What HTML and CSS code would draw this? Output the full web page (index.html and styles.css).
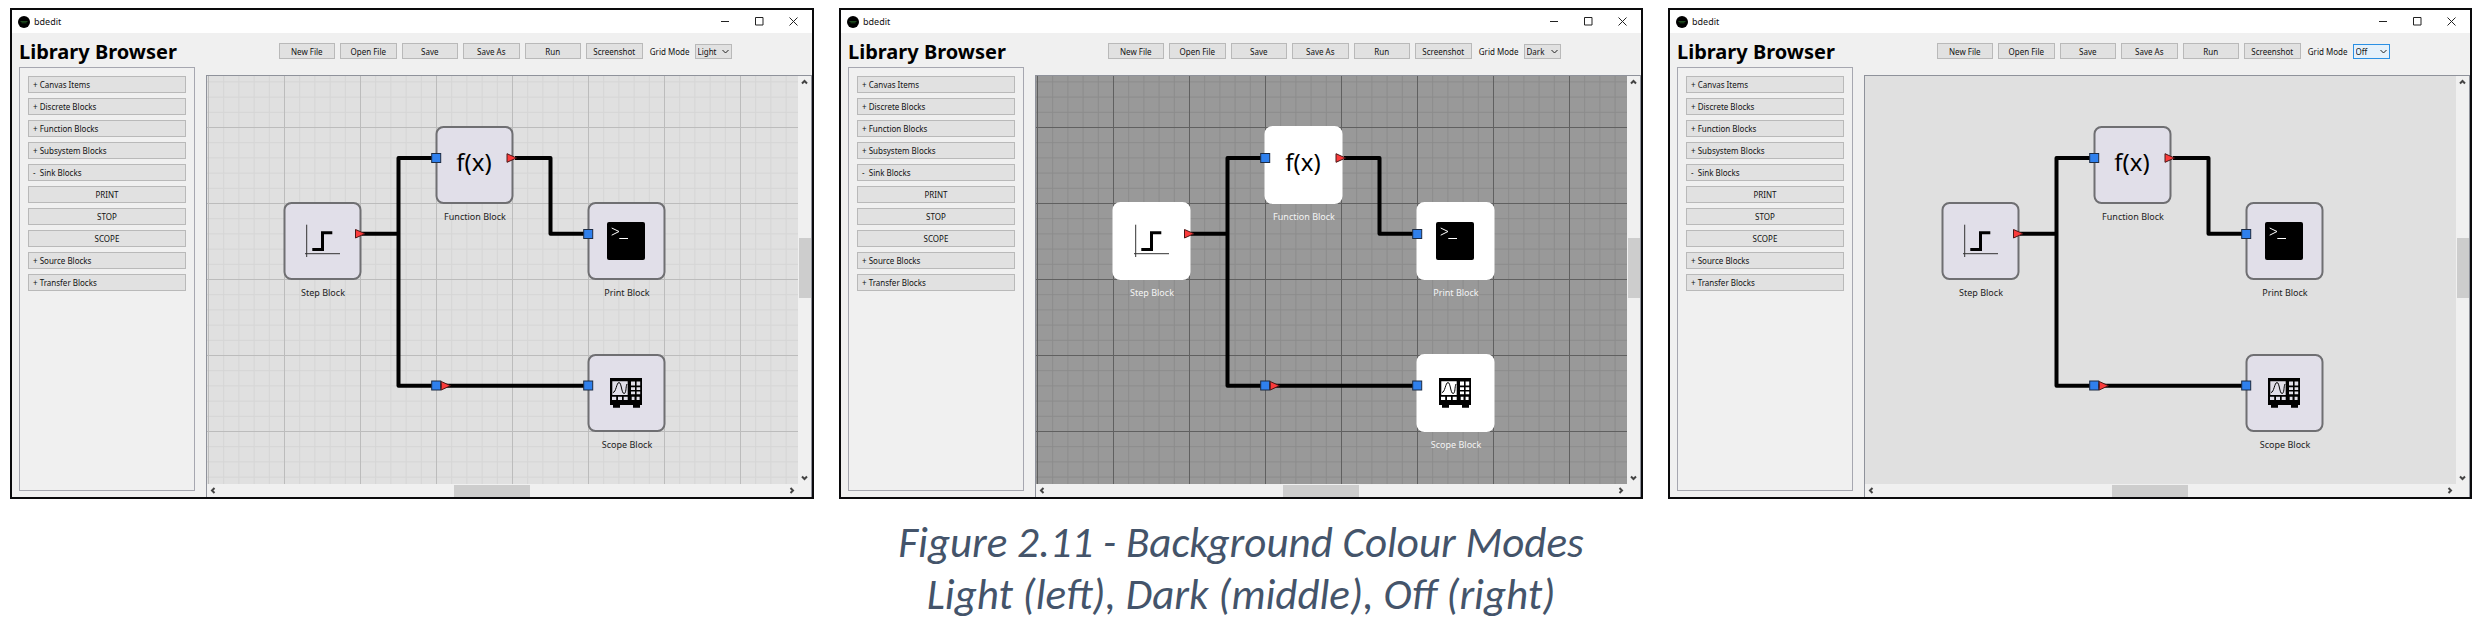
FILE: index.html
```
<!DOCTYPE html>
<html lang="en">
<head>
<meta charset="utf-8">
<title>Background Colour Modes</title>
<link rel="stylesheet" href="styles.css">
</head>
<body>
<svg class="defs" aria-hidden="true">
  <defs>
    <pattern id="grid-light" x="1" y="51" width="76" height="76" patternUnits="userSpaceOnUse">
      <path class="minor-light" d="M15.7 0V76M30.9 0V76M46.1 0V76M61.3 0V76M0 15.7H76M0 30.9H76M0 46.1H76M0 61.3H76"/>
      <path class="major-light" d="M.5 0V76M0 .5H76"/>
    </pattern>
    <pattern id="grid-dark" x="1" y="51" width="76" height="76" patternUnits="userSpaceOnUse">
      <path class="minor-dark" d="M15.7 0V76M30.9 0V76M46.1 0V76M61.3 0V76M0 15.7H76M0 30.9H76M0 46.1H76M0 61.3H76"/>
      <path class="major-dark" d="M.5 0V76M0 .5H76"/>
    </pattern>
    <symbol id="diagram" overflow="visible">
      <path class="wire" d="M155 157.7H191.5M229 82H191.5V309.7H381M308 82H343.5V157.7H381"/>
      <g class="block">
        <rect x="77.5" y="127" width="76" height="76" rx="7"/>
        <rect x="229.5" y="51" width="76" height="76" rx="7"/>
        <rect x="381.5" y="127" width="76" height="76" rx="7"/>
        <rect x="381.5" y="279" width="76" height="76" rx="7"/>
      </g>
      <path class="axis" d="M99.7 148.7V181M98 177.7H133"/>
      <path class="step" d="M105.3 173.6H115.5V156.8H125.3"/>
      <rect x="400" y="146" width="38" height="38" rx="2"/>
      <path class="prompt" d="M404.7 152L412 155.5L404.7 159.2M412.3 162.5H421"/>
      <path d="M403 302H435V329H433V331.7H426V329H413V331.7H406V329H403Z"/>
      <path class="cut" d="M405.3 305.3H420.7V319H405.3ZM424 305.6h4v4h-4zM429.6 305.6h3.6v4h-3.6zM424 311.2h4v2.8h-4zM429.6 311.2h3.6v2.8h-3.6zM424 315.6h4v2.6h-4zM429.6 315.6h3.6v2.6h-3.6zM405 320.8h4.2v3.2h-4.2zM411 320.8h4v3.2h-4zM416.7 320.8h4v3.2h-4zM424.7 320.8h2.8v3.2h-2.8zM429.6 320.8h3v3.2h-3z"/>
      <path class="wave" d="M406 316.5C409 316.500 409.500 306.500 412 306.500S414.500 317.500 417 317.500S418.500 311 420 308"/>
      <g class="input">
        <rect x="224.700" y="77.500" width="9" height="9"/>
        <rect x="376.700" y="153.500" width="9" height="9"/>
        <rect x="224.700" y="305" width="9" height="9"/>
        <rect x="376.700" y="305" width="9" height="9"/>
      </g>
      <path class="output" d="M148.500 153.500L158 157.700L148.500 162ZM300 77.700L309.500 82L300 86.300ZM234.200 305.500L243.500 309.700L234.200 314Z"/>
    </symbol>
    <symbol id="win-min" viewBox="0 0 9 9"><path class="glyph" d="M0 4.500H8"/></symbol>
    <symbol id="win-max" viewBox="0 0 9 9"><path class="glyph" d="M.5 .5H8V8H.5Z"/></symbol>
    <symbol id="win-close" viewBox="0 0 9 9"><path class="glyph" d="M.5 .5L8.500 8.500M8.500 .5L.5 8.500"/></symbol>
    <symbol id="chevron" viewBox="0 0 9 9"><path class="glyph" d="M1.500 3L4.500 6L7.500 3"/></symbol>
    <symbol id="arrow" viewBox="0 0 9 9"><path class="arrow" d="M2 5.500L4.500 3L7 5.500"/></symbol>
    <symbol id="logo" viewBox="0 0 12 12"><circle cx="6" cy="6" r="6"/><path class="logo-mark" d="M2.500 5.500H9.500M3.500 6.800H8.500"/></symbol>
  </defs>
</svg>

<main class="figure">
  <div class="windows">
    <section class="window light">
      <header class="titlebar">
        <svg class="logo"><use href="#logo"/></svg>
        <span class="app-name">bdedit</span>
        <button class="win-btn" aria-label="Minimise"><svg class="icon"><use href="#win-min"/></svg></button>
        <button class="win-btn" aria-label="Maximise"><svg class="icon"><use href="#win-max"/></svg></button>
        <button class="win-btn" aria-label="Close"><svg class="icon"><use href="#win-close"/></svg></button>
      </header>
      <div class="body">
        <aside class="library">
          <h2 class="library-title">Library Browser</h2>
          <div class="library-list">
            <button class="item">+ Canvas Items</button>
            <button class="item">+ Discrete Blocks</button>
            <button class="item">+ Function Blocks</button>
            <button class="item">+ Subsystem Blocks</button>
            <button class="item">-&nbsp; Sink Blocks</button>
            <button class="item sub">PRINT</button>
            <button class="item sub">STOP</button>
            <button class="item sub">SCOPE</button>
            <button class="item">+ Source Blocks</button>
            <button class="item">+ Transfer Blocks</button>
          </div>
        </aside>
        <div class="editor">
          <div class="toolbar">
            <div class="actions">
              <button class="action">New File</button>
              <button class="action">Open File</button>
              <button class="action">Save</button>
              <button class="action">Save As</button>
              <button class="action">Run</button>
              <button class="action">Screenshot</button>
            </div>
            <label class="mode-label" for="mode-1">Grid Mode</label>
            <div class="mode">
              <select class="mode-select" id="mode-1"><option selected>Light</option><option>Dark</option><option>Off</option></select>
              <svg class="icon mode-icon"><use href="#chevron"/></svg>
            </div>
          </div>
          <div class="view">
            <svg class="canvas" role="img" aria-label="Block diagram">
              <rect width="100%" height="100%" fill="url(#grid-light)"/>
              <use href="#diagram"/>
              <text class="fx" x="267" y="95">f(x)</text>
              <text class="name" x="116" y="220">Step Block</text>
              <text class="name" x="268" y="144">Function Block</text>
              <text class="name" x="420" y="220">Print Block</text>
              <text class="name" x="420" y="372">Scope Block</text>
            </svg>
            <div class="scroll vertical">
              <svg class="icon"><use href="#arrow"/></svg>
              <div class="before"></div><div class="thumb"></div><div class="after"></div>
              <svg class="icon down"><use href="#arrow"/></svg>
            </div>
            <div class="scroll horizontal">
              <svg class="icon left"><use href="#arrow"/></svg>
              <div class="before"></div><div class="thumb"></div><div class="after"></div>
              <svg class="icon right"><use href="#arrow"/></svg>
            </div>
          </div>
        </div>
      </div>
    </section>

    <section class="window dark">
      <header class="titlebar">
        <svg class="logo"><use href="#logo"/></svg>
        <span class="app-name">bdedit</span>
        <button class="win-btn" aria-label="Minimise"><svg class="icon"><use href="#win-min"/></svg></button>
        <button class="win-btn" aria-label="Maximise"><svg class="icon"><use href="#win-max"/></svg></button>
        <button class="win-btn" aria-label="Close"><svg class="icon"><use href="#win-close"/></svg></button>
      </header>
      <div class="body">
        <aside class="library">
          <h2 class="library-title">Library Browser</h2>
          <div class="library-list">
            <button class="item">+ Canvas Items</button>
            <button class="item">+ Discrete Blocks</button>
            <button class="item">+ Function Blocks</button>
            <button class="item">+ Subsystem Blocks</button>
            <button class="item">-&nbsp; Sink Blocks</button>
            <button class="item sub">PRINT</button>
            <button class="item sub">STOP</button>
            <button class="item sub">SCOPE</button>
            <button class="item">+ Source Blocks</button>
            <button class="item">+ Transfer Blocks</button>
          </div>
        </aside>
        <div class="editor">
          <div class="toolbar">
            <div class="actions">
              <button class="action">New File</button>
              <button class="action">Open File</button>
              <button class="action">Save</button>
              <button class="action">Save As</button>
              <button class="action">Run</button>
              <button class="action">Screenshot</button>
            </div>
            <label class="mode-label" for="mode-2">Grid Mode</label>
            <div class="mode">
              <select class="mode-select" id="mode-2"><option>Light</option><option selected>Dark</option><option>Off</option></select>
              <svg class="icon mode-icon"><use href="#chevron"/></svg>
            </div>
          </div>
          <div class="view">
            <svg class="canvas" role="img" aria-label="Block diagram">
              <rect width="100%" height="100%" fill="url(#grid-dark)"/>
              <use href="#diagram"/>
              <text class="fx" x="267" y="95">f(x)</text>
              <text class="name" x="116" y="220">Step Block</text>
              <text class="name" x="268" y="144">Function Block</text>
              <text class="name" x="420" y="220">Print Block</text>
              <text class="name" x="420" y="372">Scope Block</text>
            </svg>
            <div class="scroll vertical">
              <svg class="icon"><use href="#arrow"/></svg>
              <div class="before"></div><div class="thumb"></div><div class="after"></div>
              <svg class="icon down"><use href="#arrow"/></svg>
            </div>
            <div class="scroll horizontal">
              <svg class="icon left"><use href="#arrow"/></svg>
              <div class="before"></div><div class="thumb"></div><div class="after"></div>
              <svg class="icon right"><use href="#arrow"/></svg>
            </div>
          </div>
        </div>
      </div>
    </section>

    <section class="window off">
      <header class="titlebar">
        <svg class="logo"><use href="#logo"/></svg>
        <span class="app-name">bdedit</span>
        <button class="win-btn" aria-label="Minimise"><svg class="icon"><use href="#win-min"/></svg></button>
        <button class="win-btn" aria-label="Maximise"><svg class="icon"><use href="#win-max"/></svg></button>
        <button class="win-btn" aria-label="Close"><svg class="icon"><use href="#win-close"/></svg></button>
      </header>
      <div class="body">
        <aside class="library">
          <h2 class="library-title">Library Browser</h2>
          <div class="library-list">
            <button class="item">+ Canvas Items</button>
            <button class="item">+ Discrete Blocks</button>
            <button class="item">+ Function Blocks</button>
            <button class="item">+ Subsystem Blocks</button>
            <button class="item">-&nbsp; Sink Blocks</button>
            <button class="item sub">PRINT</button>
            <button class="item sub">STOP</button>
            <button class="item sub">SCOPE</button>
            <button class="item">+ Source Blocks</button>
            <button class="item">+ Transfer Blocks</button>
          </div>
        </aside>
        <div class="editor">
          <div class="toolbar">
            <div class="actions">
              <button class="action">New File</button>
              <button class="action">Open File</button>
              <button class="action">Save</button>
              <button class="action">Save As</button>
              <button class="action">Run</button>
              <button class="action">Screenshot</button>
            </div>
            <label class="mode-label" for="mode-3">Grid Mode</label>
            <div class="mode">
              <select class="mode-select active" id="mode-3"><option>Light</option><option>Dark</option><option selected>Off</option></select>
              <svg class="icon mode-icon"><use href="#chevron"/></svg>
            </div>
          </div>
          <div class="view">
            <svg class="canvas" role="img" aria-label="Block diagram">
              <use href="#diagram"/>
              <text class="fx" x="267" y="95">f(x)</text>
              <text class="name" x="116" y="220">Step Block</text>
              <text class="name" x="268" y="144">Function Block</text>
              <text class="name" x="420" y="220">Print Block</text>
              <text class="name" x="420" y="372">Scope Block</text>
            </svg>
            <div class="scroll vertical">
              <svg class="icon"><use href="#arrow"/></svg>
              <div class="before"></div><div class="thumb"></div><div class="after"></div>
              <svg class="icon down"><use href="#arrow"/></svg>
            </div>
            <div class="scroll horizontal">
              <svg class="icon left"><use href="#arrow"/></svg>
              <div class="before"></div><div class="thumb"></div><div class="after"></div>
              <svg class="icon right"><use href="#arrow"/></svg>
            </div>
          </div>
        </div>
      </div>
    </section>
  </div>
  <p class="caption">Figure 2.11 - Background Colour Modes<br>Light (left), Dark (middle), Off (right)</p>
</main>
</body>
</html>
```
FILE: styles.css
```
* {
  box-sizing: border-box;
}

body {
  margin: 0;
  background: #fff;
  color: #111;
  font: 8px/11px "Noto Sans", "Open Sans", sans-serif;
}

button,
select {
  margin: 0;
  padding: 0;
  border: 1px solid #b9b9b9;
  border-radius: 0;
  background: #e1e1e1;
  color: inherit;
  font: inherit;
}

.defs {
  display: block;
  width: 0;
  height: 0;
}

.figure {
  padding: 8px 9px 0 10px;
}

.windows {
  display: grid;
  grid-template-columns: repeat(3, minmax(0, 1fr));
  gap: 25px;
}

.window {
  border: 2px solid #0a0a0c;
  background: #f0f0f0;
  --canvas: #e0e0e0;
  --block: #e1dfe9;
  --outline: #6f6f72;
  --name: #1c1c1c;
}

.window.dark {
  --canvas: #999;
  --block: #fff;
  --outline: #fff;
  --name: #f4f4f4;
}

/* Title bar */
.titlebar {
  display: flex;
  align-items: center;
  height: 23px;
  padding: 0 2px 0 6px;
  background: #fff;
}

.logo {
  width: 12px;
  height: 12px;
}

.logo-mark {
  stroke: #1d4a1d;
  stroke-width: 1;
}

.app-name {
  flex: 1;
  padding-left: 4px;
  font-size: 9px;
}

.win-btn {
  display: grid;
  place-items: center;
  width: 34px;
  height: 23px;
  border: 0;
  background: none;
}

.icon {
  display: block;
  width: 9px;
  height: 9px;
}

.glyph {
  fill: none;
  stroke: #222;
  stroke-width: 1;
}

.arrow {
  fill: none;
  stroke: #444;
  stroke-width: 2;
}

/* Library panel */
.body {
  display: grid;
  grid-template-columns: 194px minmax(0, 1fr);
}

.library {
  display: flex;
  flex-direction: column;
  padding: 0 11px 6px 7px;
}

.library-title {
  height: 34px;
  margin: 0;
  padding-top: 2px;
  color: #000;
  font-size: 20px;
  font-weight: bold;
  line-height: 34px;
  white-space: nowrap;
}

.library-list {
  display: flex;
  flex: 1;
  flex-direction: column;
  gap: 5px;
  padding: 8px;
  border: 1px solid #a6a7b0;
}

.item {
  height: 17px;
  padding: 0 4px;
  text-align: left;
}

.item.sub {
  text-align: center;
}

/* Toolbar */
.toolbar {
  display: flex;
  align-items: center;
  justify-content: center;
  height: 42px;
  padding: 0 8px 6px 0;
}

.actions {
  display: grid;
  grid-template-columns: repeat(6, 1fr);
  gap: 5px;
  width: 364px;
}

.action {
  height: 16px;
}

.mode-label {
  width: 52px;
  padding: 1px 5px 0 0;
  text-align: right;
  white-space: nowrap;
}

.mode {
  display: grid;
  align-items: center;
  width: 37px;
  padding-top: 1px;
}

.mode-select {
  grid-area: 1 / 1;
  height: 15px;
  padding-left: 2px;
  appearance: none;
}

.mode-select.active {
  border-color: #2a90e4;
  background: #e5f1fb;
}

.mode-icon {
  grid-area: 1 / 1;
  justify-self: end;
  margin-right: 2px;
  pointer-events: none;
}

/* Diagram view */
.view {
  display: grid;
  grid-template-columns: minmax(0, 1fr) 13px;
  grid-template-rows: 408px 13px;
  border: 1px solid #8f929b;
  border-bottom: 0;
}

.canvas {
  display: block;
  width: 100%;
  height: 100%;
  background: var(--canvas);
}

.minor-light { stroke: #d5d5d5; }
.major-light { stroke: #bcbcbc; stroke-width: 1; }
.minor-dark { stroke: #8b8b8b; }
.major-dark { stroke: #606060; stroke-width: 1; }

.wire {
  fill: none;
  stroke: #000;
  stroke-width: 4;
  stroke-linejoin: round;
}

.block {
  fill: var(--block);
  stroke: var(--outline);
  stroke-width: 2;
}

.axis {
  fill: none;
  stroke: #333;
  stroke-width: 1;
}

.step {
  fill: none;
  stroke: #000;
  stroke-width: 3;
}

.prompt {
  fill: none;
  stroke: #fff;
  stroke-width: 1;
}

.cut {
  fill: var(--block);
}

.wave {
  fill: none;
  stroke: #000;
  stroke-width: 1;
}

.input {
  fill: #2f80ed;
  stroke: #1d2c44;
  stroke-width: 1;
}

.output {
  fill: #fb3b3b;
  stroke: #4c1616;
  stroke-width: 1;
}

.fx {
  fill: #000;
  font-size: 24px;
  text-anchor: middle;
}

.name {
  fill: var(--name);
  font-size: 9px;
  text-anchor: middle;
}

/* Scroll bars */
.scroll {
  display: flex;
  align-items: center;
  padding: 2px;
}

.vertical {
  flex-direction: column;
}

.horizontal .thumb {
  flex: 75;
  height: 12px;
}

.horizontal .before { flex: 235; }
.horizontal .after { flex: 256; }

.vertical .thumb {
  flex: 59;
  width: 12px;
}

.vertical .before { flex: 151; }
.vertical .after { flex: 175; }

.thumb {
  background: #cdcdcd;
}

.down { transform: rotate(180deg); }
.left { transform: rotate(-90deg); }
.right { transform: rotate(90deg); }

/* Caption */
.caption {
  margin: 18px 0 0;
  color: #44546a;
  font: italic 43px/52px Carlito, Lato, sans-serif;
  text-align: center;
}
```
